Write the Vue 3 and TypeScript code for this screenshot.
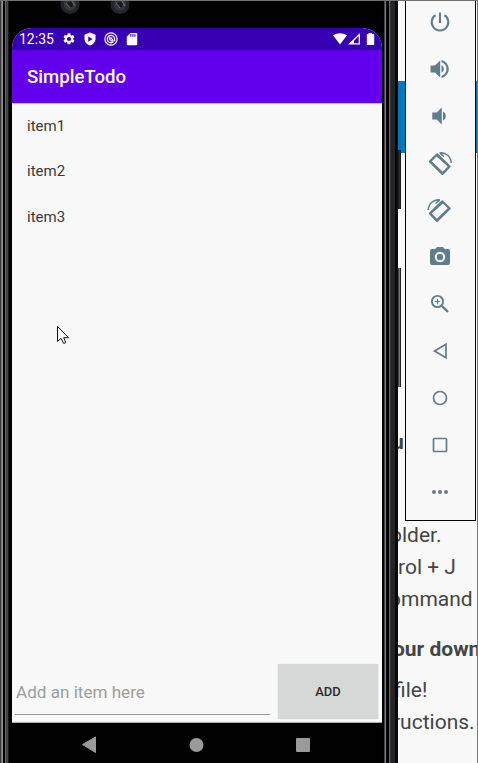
<script setup lang="ts">
import { ref } from 'vue'

interface DocLine {
  text: string
  shift: number
  cls?: string
}

const items = ref<string[]>(['item1', 'item2', 'item3'])
const draft = ref('')

const docLines: DocLine[] = [
  { text: 'older.', shift: -8 },
  { text: 'rol + J', shift: 0 },
  { text: 'ommand', shift: -9 },
  { text: 'our down', shift: -5, cls: 'strong' },
  { text: 'file!', shift: -4 },
  { text: 'ructions.', shift: -5 },
]

const tools: string[] = [
  'power', 'volumeUp', 'volumeDown', 'rotateLeft', 'rotateRight',
  'camera', 'zoom', 'back', 'home', 'overview', 'more',
]

function addItem(): void {
  const text = draft.value.trim()
  if (text) items.value.push(text)
  draft.value = ''
}
</script>

<template>
  <div class="desktop">
    <div class="phone">
      <div class="bezel-left"></div>
      <div class="body">
        <div class="forehead">
          <svg v-for="n in 2" :key="n" class="lens" viewBox="0 0 20 14">
            <circle cx="10" cy="4.5" r="9.5" fill="#20262b" />
            <circle cx="10" cy="4.5" r="6.2" fill="#34383c" />
            <circle cx="10" cy="4.5" r="3" fill="#171b1f" />
            <path d="M6 3 L10 8 M12 1 L15 6" stroke="#63686c" stroke-width="1.2" />
          </svg>
        </div>
        <div class="screen">
          <div class="status">
            <span class="clock">12:35</span>
            <svg class="s-icon" viewBox="0 0 24 24"><path fill="#fff" d="M19.14 12.94c.04-.3.06-.61.06-.94s-.02-.64-.07-.94l2.03-1.58a.49.49 0 0 0 .12-.61l-1.92-3.32a.49.49 0 0 0-.59-.22l-2.39.96a7 7 0 0 0-1.62-.94l-.36-2.54A.48.48 0 0 0 13.92 2h-3.84a.48.48 0 0 0-.47.41l-.36 2.54a7 7 0 0 0-1.62.94l-2.39-.96a.48.48 0 0 0-.59.22L2.74 8.47a.48.48 0 0 0 .12.61l2.03 1.58a7 7 0 0 0 0 1.88l-2.03 1.58a.49.49 0 0 0-.12.61l1.92 3.32c.12.22.37.29.59.22l2.39-.96c.5.38 1.03.7 1.62.94l.36 2.54c.05.24.24.41.48.41h3.84c.24 0 .44-.17.47-.41l.36-2.54a7 7 0 0 0 1.62-.94l2.39.96c.22.08.47 0 .59-.22l1.92-3.32a.48.48 0 0 0-.12-.61zM12 15.6a3.6 3.6 0 1 1 0-7.2 3.6 3.6 0 0 1 0 7.2z" /></svg>
            <svg class="s-icon" viewBox="0 0 24 24"><path fill="#fff" fill-rule="evenodd" d="M12 1 2.5 4.5V11c0 5.6 4 10.7 9.500 12 5.500-1.300 9.500-6.400 9.500-12V4.500zM9 7.500l7.500 4.500L9 16.500z" /></svg>
            <svg class="s-icon" viewBox="0 0 24 24" fill="none" stroke="#fff"><circle cx="12" cy="12" r="10.500" stroke-width="2" /><path d="M16.500 16.500A6.300 6.300 0 1 1 18.200 11.500V16" stroke-width="2.200" /><path d="M8 10.500 12.500 10 16 15.500M9 12l6 5" stroke-width="2" /></svg>
            <svg class="s-icon" viewBox="0 0 24 24"><path fill="#fff" fill-rule="evenodd" d="M9 1.500h10a2 2 0 0 1 2 2v17a2 2 0 0 1-2 2H5a2 2 0 0 1-2-2V8zM9 4v4h2V4zm3.500 0v4h2V4zM16 4v4h2V4z" /></svg>
            <svg class="signals" viewBox="0 0 44 14">
              <path fill="#fff" d="M0 3.300Q7 -1 14 3.300L7 12.500z" />
              <path fill="#fff" fill-rule="evenodd" d="M27 1v11.500H15zM25.700 4.200v7h-4.700V8.800z" />
              <path fill="#fff" d="M35.500 1h3.500v1h1.500a.7.7 0 0 1 .7.700v9.500a.7.700 0 0 1-.7.700h-6a.7.700 0 0 1-.7-.7V2.700a.7.700 0 0 1 .7-.7h1z" />
            </svg>
          </div>
          <header class="appbar">SimpleTodo</header>
          <ul class="list">
            <li v-for="item in items" :key="item">{{ item }}</li>
          </ul>
          <form class="composer" @submit.prevent="addItem">
            <input v-model="draft" class="field" placeholder="Add an item here" />
            <button class="add" type="submit">ADD</button>
          </form>
        </div>
        <nav class="navbar">
          <svg viewBox="0 0 370 40" fill="#9a9a9a">
            <path d="M70.500 21.500 83.500 14V29.500z" stroke="#9a9a9a" stroke-width="1" stroke-linejoin="round" />
            <circle cx="184.500" cy="22" r="7" />
            <rect x="284" y="15" width="14" height="14" rx="1" />
          </svg>
        </nav>
      </div>
      <div class="bezel-right"></div>
    </div>

    <div class="doc">
      <div class="hero"></div>
      <div class="copy-top"><span>u</span></div>
      <p v-for="line in docLines" :key="line.text" :class="line.cls">
        <span :style="{ marginLeft: line.shift + 'px' }">{{ line.text }}</span>
      </p>
    </div>

    <i class="side-button power-key"></i>
    <i class="side-button volume-key"></i>

    <aside class="tools">
      <svg v-for="tool in tools" :key="tool" class="tool" viewBox="0 0 24 24">
        <g v-if="tool === 'power'" fill="none" stroke="#607d8b" stroke-width="2.100">
          <path d="M12 2.500v10.500M7.500 5.200a8.300 8.300 0 1 0 9 0" />
        </g>
        <path v-else-if="tool === 'volumeUp'" fill="#607d8b" d="M2.500 8.500v7h4.500l5.200 5V3.500L7 8.500zM13.500 8v8a4.500 4.500 0 0 0 0-8zM13.500 3v2.300a7 7 0 0 1 0 13.400V21a9.200 9.200 0 0 0 0-18z" />
        <path v-else-if="tool === 'volumeDown'" fill="#607d8b" d="M4.300 8.500v7h4.500l5 5V3.500l-5 5zM15 7.500v9a5 5 0 0 0 0-9z" />
        <g v-else-if="tool === 'rotateLeft' || tool === 'rotateRight'" :class="tool">
          <path fill="#607d8b" fill-rule="evenodd" d="M8.200 1.800a1.400 1.400 0 0 1 2 0L22.200 13.600a1.400 1.400 0 0 1 0 2L15.500 22.400a1.400 1.400 0 0 1-2 0L1.300 10.600a1.400 1.400 0 0 1 0-2zM8.600 4.400 3.800 9.200 14.600 19.700 19.700 14.600z" />
          <path fill="none" stroke="#607d8b" stroke-width="1.500" d="M11.500 1C18 .1 23 4.600 23.200 11M12 1.300l4 3.200" />
        </g>
        <path v-else-if="tool === 'camera'" fill="#607d8b" fill-rule="evenodd" d="M9 2 7.200 4H4a2 2 0 0 0-2 2v12a2 2 0 0 0 2 2h16a2 2 0 0 0 2-2V6a2 2 0 0 0-2-2h-3.200L15 2zM12 6.800a5.200 5.200 0 1 1 0 10.400 5.200 5.200 0 0 1 0-10.400zM12 8.800a3.200 3.200 0 1 0 0 6.400 3.200 3.200 0 0 0 0-6.400z" />
        <g v-else-if="tool === 'zoom'" fill="none" stroke="#607d8b">
          <circle cx="9.500" cy="9.500" r="5.600" stroke-width="1.900" />
          <path d="M14 14 20 20" stroke-width="2.400" />
          <path d="M9.500 6.800v5.400M6.800 9.500h5.400" stroke-width="1.200" />
        </g>
        <path v-else-if="tool === 'back'" fill="none" stroke="#607d8b" stroke-width="1.700" d="M6.500 12 18 5.200v13.600z" />
        <circle v-else-if="tool === 'home'" cx="12" cy="12" r="6.500" fill="none" stroke="#607d8b" stroke-width="1.700" />
        <rect v-else-if="tool === 'overview'" x="5.500" y="5.500" width="13" height="13" rx=".8" fill="none" stroke="#607d8b" stroke-width="1.700" />
        <g v-else fill="#607d8b"><circle cx="6" cy="12" r="2" /><circle cx="12" cy="12" r="2" /><circle cx="18" cy="12" r="2" /></g>
      </svg>
    </aside>

    <svg class="pointer" viewBox="0 0 14 20">
      <path d="M1.500 1.500V16.500L5 13.300 7.700 18.500 9.800 17.500 7.700 12.700H12.500z" fill="#fff" stroke="#111" stroke-width="1" />
    </svg>
    <div class="top-edge"></div>
  </div>
</template>

<style>
body {
  margin: 0;
  overflow: hidden;
}
</style>

<style scoped>
.desktop {
  position: relative;
  display: flex;
  width: 478px;
  height: 763px;
  overflow: hidden;
  background: #f8f8f8;
  font-family: Roboto, "Liberation Sans", sans-serif;
}
.top-edge {
  position: absolute;
  inset: 0 0 auto;
  height: 1px;
  background: #717171;
}
.phone {
  display: flex;
  flex: 0 0 398px;
  background: #020202;
}
.bezel-left {
  flex: 0 0 12px;
  background: linear-gradient(90deg, #383838 0 1px, #777 1px 2px, #909090 2px 3px, #000 3px 5px, #6b6b6b 5px 6px, #3a3a3a 6px 7px, #484848 7px 8px, #181818 8px 9px, #000 9px);
}
.bezel-right {
  flex: 0 0 16px;
  background: linear-gradient(90deg, #000 0 2px, #454548 2px 3px, #77777b 3px 4px, #111 4px 5px, #000 5px 7px, #66666a 7px 8px, #333 8px 9px, #242424 9px 13px, #090909 13px 16px);
}
.body {
  display: flex;
  flex-direction: column;
  flex: 0 0 370px;
}
.forehead {
  display: flex;
  gap: 30px;
  height: 28px;
  padding-left: 48px;
}
.lens {
  width: 20px;
  height: 14px;
}
.screen {
  display: flex;
  flex-direction: column;
  box-sizing: border-box;
  height: 695px;
  border-bottom: 1px solid #aaa;
  border-radius: 20px 20px 0 0;
  overflow: hidden;
  background: #f8f8f8;
}
.status {
  display: flex;
  align-items: center;
  flex: 0 0 22px;
  padding: 0 5px 0 7px;
  background: #3700b3;
  color: #fff;
}
.clock {
  width: 43px;
  font-size: 14px;
  line-height: 22px;
}
.s-icon {
  width: 14px;
  height: 14px;
  margin-right: 7px;
}
.signals {
  width: 44px;
  height: 14px;
  margin-left: auto;
}
.appbar {
  flex: 0 0 53px;
  box-sizing: border-box;
  padding: 2px 0 0 15px;
  line-height: 51px;
  background: #6200ee;
  box-shadow: 0 1px 1px #c7c0d0;
  color: #fff;
  font-size: 18.600px;
  font-weight: 500;
}
.list {
  flex: 1;
  margin: 0;
  padding: 0;
  list-style: none;
}
.list li {
  height: 45.300px;
  padding-left: 15px;
  line-height: 47px;
  font-size: 15px;
  color: #383838;
}
.composer {
  display: flex;
  gap: 8px;
  height: 58px;
  padding: 0 4px 0 3px;
}
.field {
  box-sizing: border-box;
  width: 255px;
  height: 51px;
  padding: 5px 0 0 1px;
  border: 0;
  border-bottom: 1px solid #999;
  outline: 0;
  background: transparent;
  font: 17.100px Roboto, sans-serif;
}
.field::placeholder {
  color: #9d9d9d;
}
.add {
  width: 100px;
  height: 55px;
  padding: 0;
  border: 0;
  border-radius: 2px;
  background: #d6d8d7;
  box-shadow: 0 0 1px #aaa;
  color: #2a2a2a;
  font: 500 13px Roboto, sans-serif;
}
.navbar {
  height: 40px;
  background: #020202;
}
.navbar svg {
  display: block;
  width: 370px;
  height: 40px;
}
.doc {
  flex: 1;
  overflow: hidden;
  padding-top: 81px;
  font-size: 21px;
  line-height: 32px;
  color: #444;
}
.hero {
  height: 72px;
  background: #0277bd;
}
.copy-top {
  height: 366px;
  font-weight: 700;
  display: flex;
  align-items: flex-start;
}
.copy-top span {
  margin: 273px 0 0 -6px;
}
.doc p {
  margin: 0;
  white-space: nowrap;
}
.doc p.strong {
  margin: 18px 0 9px;
  font-weight: 700;
}
.side-button {
  position: absolute;
  left: 397px;
  width: 4px;
  background: linear-gradient(90deg, #080808, #303030 65%, #151515);
}
.power-key {
  top: 150px;
  height: 59px;
}
.volume-key {
  top: 268px;
  height: 119px;
  background: linear-gradient(90deg, #111 1px, #777 2px 3px, #222 3px);
}
.tools {
  position: absolute;
  top: 0;
  left: 405px;
  display: flex;
  flex-direction: column;
  align-items: center;
  gap: 23px;
  box-sizing: border-box;
  width: 71px;
  height: 521px;
  padding-top: 9px;
  border: 1px solid #000;
  background: #f8f8f8;
}
.tool {
  flex: 0 0 24px;
  width: 24px;
  height: 24px;
  margin-right: 1px;
  overflow: visible;
}
.rotateLeft {
  transform: translateY(1px);
}
.rotateRight {
  transform: translate(23.500px, 1px) scaleX(-1);
}
.pointer {
  position: absolute;
  top: 325px;
  left: 56px;
  width: 14px;
  height: 20px;
}
.desktop::after {
  content: "";
  position: absolute;
  inset: 0 0 0 auto;
  width: 1px;
  background: #777;
}
</style>
